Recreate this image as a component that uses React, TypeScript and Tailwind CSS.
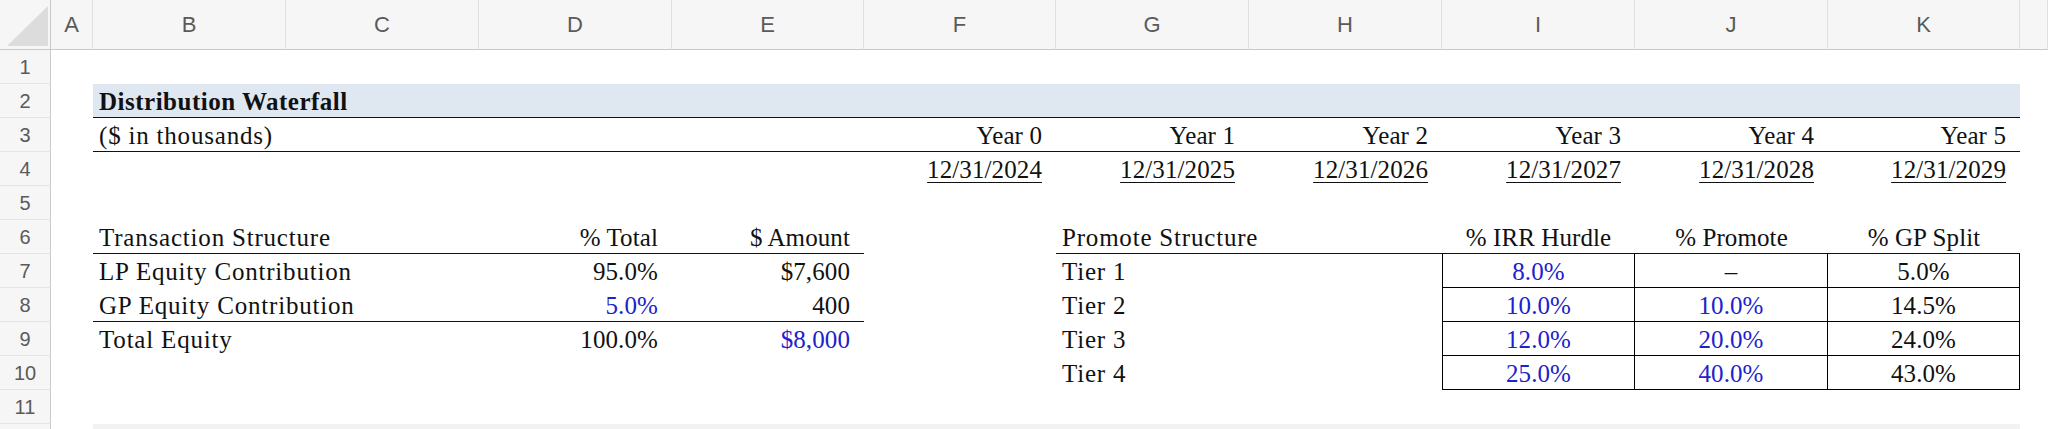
import React from "react";

const serif = "font-['Liberation_Serif','Times_New_Roman',serif]";
const sans = "font-['Liberation_Sans',Arial,sans-serif]";

type CellProps = {
  children?: React.ReactNode;
  className?: string;
  blue?: boolean;
};

function C({ children, className = "", blue = false }: CellProps) {
  return (
    <div
      className={`flex items-center whitespace-nowrap overflow-visible text-[25px] leading-none pt-[1px] ${serif} ${
        blue ? "text-[#1c22cc]" : "text-[#111]"
      } ${className}`}
    >
      {children}
    </div>
  );
}

function RowHead({ n }: { n: number }) {
  return (
    <div
      className={`flex items-center justify-center bg-[#f6f6f6] border-r border-r-[#c9c9c9] border-b border-b-[#e4e4e4] text-[20px] text-[#5a5a5a] ${sans}`}
    >
      {n}
    </div>
  );
}

const L = "justify-start pl-[6px] tracking-[0.8px]";
const R = "justify-end pr-[14px] tracking-[0.1px]";
const M = "justify-center tracking-[0.1px]";
const BB = "border-b border-b-[#111]";
const BOX = "border-b border-r border-[#000]";

function Empty({ n }: { n: number }) {
  return (
    <>
      {Array.from({ length: n }).map((_, i) => (
        <div key={i} />
      ))}
    </>
  );
}

export default function App() {
  const letters = ["A", "B", "C", "D", "E", "F", "G", "H", "I", "J", "K", ""];
  const years = ["Year 0", "Year 1", "Year 2", "Year 3", "Year 4", "Year 5"];
  const dates = ["12/31/2024", "12/31/2025", "12/31/2026", "12/31/2027", "12/31/2028", "12/31/2029"];
  const tiers = [
    { t: "Tier 1", irr: "8.0%", pr: "–", gp: "5.0%", prBlue: false },
    { t: "Tier 2", irr: "10.0%", pr: "10.0%", gp: "14.5%", prBlue: true },
    { t: "Tier 3", irr: "12.0%", pr: "20.0%", gp: "24.0%", prBlue: true },
    { t: "Tier 4", irr: "25.0%", pr: "40.0%", gp: "43.0%", prBlue: true },
  ];
  const left: Array<[string, string, string, boolean, boolean, boolean]> = [
    ["LP Equity Contribution", "95.0%", "$7,600", false, false, false],
    ["GP Equity Contribution", "5.0%", "400", true, false, true],
    ["Total Equity", "100.0%", "$8,000", false, true, false],
    ["", "", "", false, false, false],
  ];

  return (
    <div className="w-[2048px] h-[429px] overflow-hidden bg-white">
      <div className="grid grid-cols-[51px_42px_193px_193px_193px_192px_192px_193px_193px_193px_193px_192px_1fr] grid-rows-[50px_repeat(11,34px)_1fr] h-[429px]">
        {/* Header row */}
        <div className="relative bg-[#f6f6f6] border-r border-r-[#c9c9c9] border-b border-b-[#c9c9c9]">
          <svg className="absolute left-[7px] top-[6px]" width="41" height="40" viewBox="0 0 41 40">
            <polygon points="41,0 41,40 0,40" fill="#dcdcdc" />
          </svg>
        </div>
        {letters.map((l, i) => (
          <div
            key={i}
            className={`flex items-center justify-center bg-[#f6f6f6] border-r border-r-[#e0e0e0] border-b border-b-[#c9c9c9] text-[22px] text-[#5a5a5a] ${sans}`}
          >
            {l}
          </div>
        ))}

        {/* Row 1 */}
        <RowHead n={1} />
        <Empty n={12} />

        {/* Row 2 */}
        <RowHead n={2} />
        <div />
        <C className={`col-span-10 bg-[#dfe7f1] ${BB} justify-start pl-[6px] tracking-[0.5px] font-bold`}>
          Distribution Waterfall
        </C>
        <div />

        {/* Row 3 */}
        <RowHead n={3} />
        <div />
        <C className={`${BB} ${L}`}>($ in thousands)</C>
        <C className={BB} />
        <C className={BB} />
        <C className={BB} />
        {years.map((y) => (
          <C key={y} className={`${BB} ${R}`}>
            {y}
          </C>
        ))}
        <div />

        {/* Row 4 */}
        <RowHead n={4} />
        <Empty n={5} />
        {dates.map((d) => (
          <C key={d} className={R}>
            <span className="underline underline-offset-[4px] decoration-1">{d}</span>
          </C>
        ))}
        <div />

        {/* Row 5 */}
        <RowHead n={5} />
        <Empty n={12} />

        {/* Row 6 */}
        <RowHead n={6} />
        <div />
        <C className={`${BB} ${L}`}>Transaction Structure</C>
        <C className={BB} />
        <C className={`${BB} ${R}`}>% Total</C>
        <C className={`${BB} ${R}`}>$ Amount</C>
        <div />
        <C className={`${BB} ${L}`}>Promote Structure</C>
        <C className={BB} />
        <C className={`${BB} ${M}`}>% IRR Hurdle</C>
        <C className={`${BB} ${M}`}>% Promote</C>
        <C className={`${BB} ${M}`}>% GP Split</C>
        <div />

        {/* Rows 7-10 */}
        {tiers.map((t, i) => {
          const [name, pct, amt, pctBlue, amtBlue, under] = left[i];
          const b = under ? BB : "";
          return (
            <React.Fragment key={t.t}>
              <RowHead n={7 + i} />
              <div />
              <C className={`${b} ${L}`}>{name}</C>
              <C className={b} />
              <C className={`${b} ${R}`} blue={pctBlue}>
                {pct}
              </C>
              <C className={`${b} ${R}`} blue={amtBlue}>
                {amt}
              </C>
              <div />
              <C className={L}>{t.t}</C>
              <div />
              <C className={`${BOX} border-l ${M}`} blue>
                {t.irr}
              </C>
              <C className={`${BOX} ${M}`} blue={t.prBlue}>
                {t.pr}
              </C>
              <C className={`${BOX} ${M}`}>{t.gp}</C>
              <div />
            </React.Fragment>
          );
        })}

        {/* Row 11 */}
        <RowHead n={11} />
        <Empty n={12} />

        {/* Row 12 (partial) */}
        <div className="bg-[#f6f6f6] border-r border-r-[#c9c9c9]" />
        <div />
        <div className="col-span-10 bg-[#f2f2f2]" />
        <div />
      </div>
    </div>
  );
}
